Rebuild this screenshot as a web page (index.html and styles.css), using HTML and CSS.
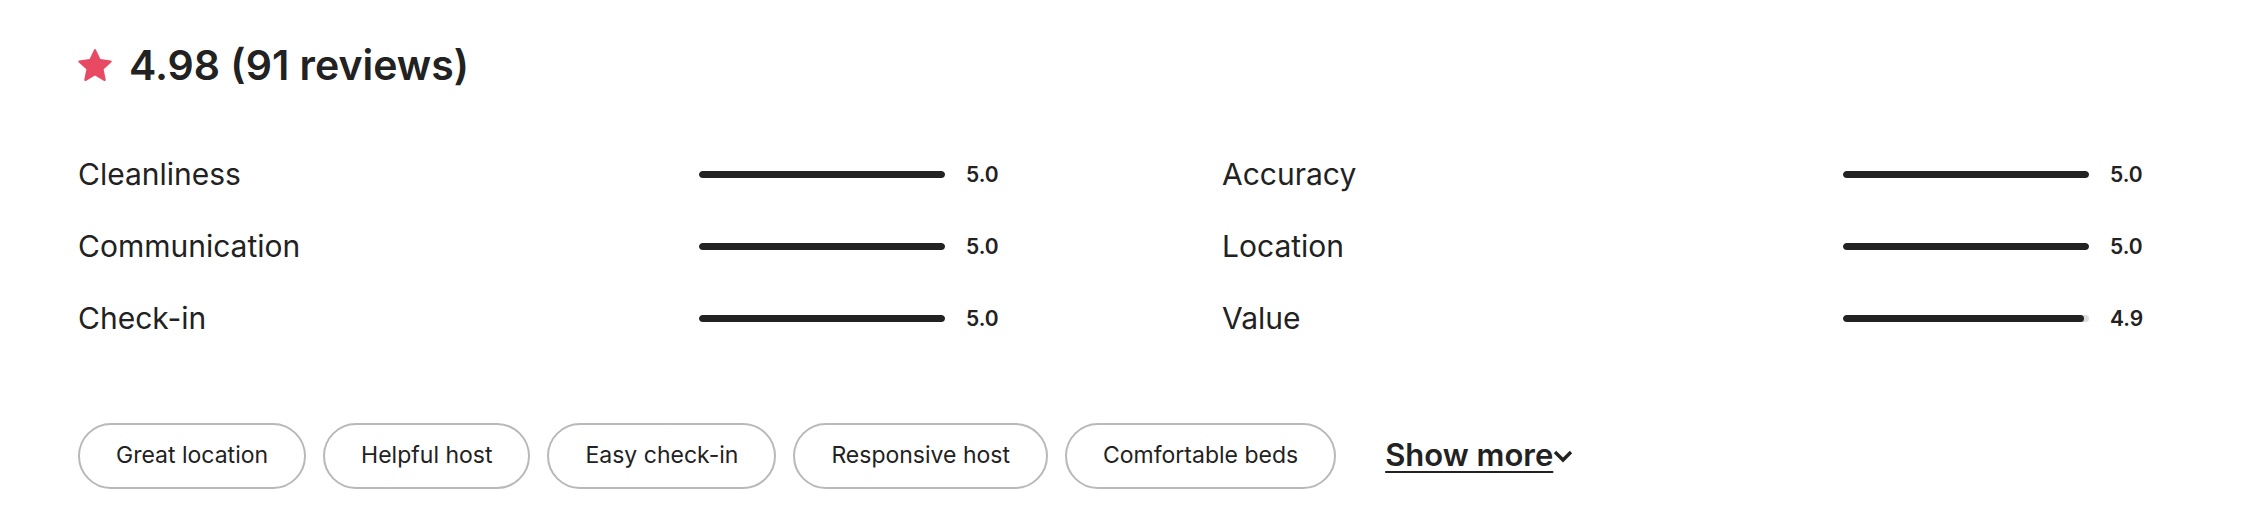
FILE: index.html
```html
<!DOCTYPE html>
<html>
<head>
    <title>Reviews</title>
    <meta charset="UTF-8">
    <meta name="viewport" content="width=device-width, initial-scale=1.0">
    <link rel="stylesheet" href="styles.css">
</head>
<body>
    <div class="reviews">
        <h2 class="summary">
            <svg class="star" viewBox="0 0 32 32" aria-hidden="true">
                <path d="M15.094 1.579l-4.124 8.885-9.86 1.27a1 1 0 0 0-.542 1.736l7.293 6.565-1.965 9.852a1 1 0 0 0 1.483 1.061L16 25.951l8.625 4.997a1 1 0 0 0 1.482-1.06l-1.965-9.853 7.293-6.565a1 1 0 0 0-.541-1.735l-9.86-1.271-4.127-8.885a1 1 0 0 0-1.814 0z"></path>
            </svg>
            <span>4.98 (91 reviews)</span>
        </h2>

        <div class="scores">
            <div class="score">
                <span class="label">Cleanliness</span>
                <span class="track"><span class="fill" style="width: 100%"></span></span>
                <span class="value">5.0</span>
            </div>
            <div class="score">
                <span class="label">Accuracy</span>
                <span class="track"><span class="fill" style="width: 100%"></span></span>
                <span class="value">5.0</span>
            </div>
            <div class="score">
                <span class="label">Communication</span>
                <span class="track"><span class="fill" style="width: 100%"></span></span>
                <span class="value">5.0</span>
            </div>
            <div class="score">
                <span class="label">Location</span>
                <span class="track"><span class="fill" style="width: 100%"></span></span>
                <span class="value">5.0</span>
            </div>
            <div class="score">
                <span class="label">Check-in</span>
                <span class="track"><span class="fill" style="width: 100%"></span></span>
                <span class="value">5.0</span>
            </div>
            <div class="score">
                <span class="label">Value</span>
                <span class="track"><span class="fill" style="width: 98%"></span></span>
                <span class="value">4.9</span>
            </div>
        </div>

        <div class="tags">
            <button class="tag">Great location</button>
            <button class="tag">Helpful host</button>
            <button class="tag">Easy check-in</button>
            <button class="tag">Responsive host</button>
            <button class="tag">Comfortable beds</button>
            <button class="more">
                <span class="more-text">Show more</span>
                <svg class="chevron" viewBox="0 0 20 20" aria-hidden="true">
                    <path d="M2 6l8 8 8-8"></path>
                </svg>
            </button>
        </div>
    </div>
</body>
</html>
```

FILE: styles.css
```css
body {
    margin: 0;
    background: #ffffff;
    color: #222222;
    font-family: Inter, "Noto Sans", sans-serif;
}
.reviews {
    padding: 41px 0 0 78px;
}
.summary {
    display: flex;
    align-items: center;
    gap: 17px;
    margin: 0;
    font-size: 41px;
    line-height: 48px;
    font-weight: 600;
}
.star {
    width: 34px;
    height: 34px;
    fill: #e74a62;
}
.scores {
    display: grid;
    grid-template-columns: 920px 920px;
    column-gap: 224px;
    margin-top: 49px;
}
.score {
    display: flex;
    align-items: center;
    height: 72px;
}
.label {
    flex: 1;
    font-size: 30px;
    line-height: 36px;
}
.track {
    width: 246px;
    height: 7px;
    border-radius: 4px;
    background: #dddddd;
    overflow: hidden;
}
.fill {
    display: block;
    height: 100%;
    border-radius: 4px;
    background: #222222;
}
.value {
    width: 32px;
    margin-left: 21px;
    font-size: 21px;
    font-weight: 600;
}
.tags {
    display: flex;
    align-items: center;
    gap: 17px;
    margin-top: 69px;
}
.tag {
    font-family: inherit;
    font-size: 23px;
    line-height: 30px;
    color: #222222;
    background: #ffffff;
    border: 2px solid #b9b9b9;
    border-radius: 34px;
    padding: 15px 36px 17px;
}
.more {
    display: flex;
    align-items: center;
    margin: 0 0 4px 32px;
    padding: 0;
    border: none;
    background: none;
    font-family: inherit;
    color: #222222;
}
.more-text {
    font-size: 31px;
    font-weight: 600;
    text-decoration: underline;
    text-underline-offset: 5px;
    text-decoration-thickness: 2px;
}
.chevron {
    width: 20px;
    height: 20px;
    margin-top: 4px;
    fill: none;
    stroke: #222222;
    stroke-width: 3.4;
}
```
